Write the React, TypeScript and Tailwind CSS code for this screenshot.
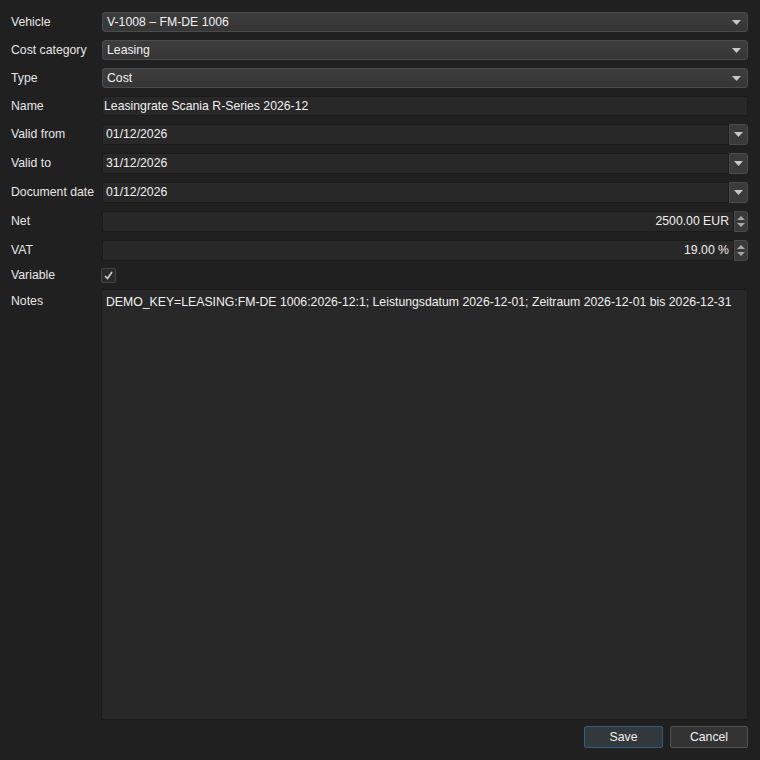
import React from "react";

const font = { fontFamily: '"Liberation Sans", Arial, sans-serif' };

function Arrow() {
  return (
    <svg width="9" height="5" viewBox="0 0 9 5" className="shrink-0">
      <path d="M0 0 H9 L4.5 5 Z" fill="#c8c8c8" />
    </svg>
  );
}

function Combo({ value }: { value: string }) {
  return (
    <div className="flex h-[20px] flex-1 items-center justify-between rounded-[3px] border border-[#4b4b4b] bg-gradient-to-b from-[#3d3d3d] to-[#363636] pl-[4px] pr-[6px] text-[12.25px] text-[#f0f0f0]">
      <span>{value}</span>
      <Arrow />
    </div>
  );
}

function DateEdit({ value }: { value: string }) {
  return (
    <div className="flex h-[21px] flex-1 items-stretch">
      <div className="flex flex-1 items-center rounded-l-[2px] border border-[#1b1b1b] bg-[#282828] pl-[3px] text-[12.25px] text-[#f0f0f0]">
        {value}
      </div>
      <div className="flex w-[19px] items-center justify-center rounded-r-[3px] border border-[#4b4b4b] bg-[#3a3a3a]">
        <Arrow />
      </div>
    </div>
  );
}

function SpinEdit({ value }: { value: string }) {
  return (
    <div className="flex h-[21px] flex-1 items-stretch">
      <div className="flex flex-1 items-center justify-end rounded-l-[2px] border border-[#1b1b1b] bg-[#282828] pr-[4px] text-[12.25px] text-[#f0f0f0]">
        {value}
      </div>
      <div className="flex w-[14px] flex-col items-center justify-center gap-[3px] rounded-r-[3px] border border-[#4b4b4b] bg-[#3a3a3a]">
        <svg width="8" height="4" viewBox="0 0 8 4">
          <path d="M0 4 H8 L4 0 Z" fill="#a8a8a8" />
        </svg>
        <svg width="8" height="4" viewBox="0 0 8 4">
          <path d="M0 0 H8 L4 4 Z" fill="#a8a8a8" />
        </svg>
      </div>
    </div>
  );
}

function Row({ label, children, className = "" }: { label: string; children: React.ReactNode; className?: string }) {
  return (
    <div className={`flex items-center ${className}`}>
      <div className="w-[91px] shrink-0 text-[12.25px] text-[#e6e6e6]">{label}</div>
      {children}
    </div>
  );
}

export default function App() {
  return (
    <div className="flex h-[760px] w-[760px] flex-col bg-[#202020] pb-[12px] pl-[11px] pr-[12px] pt-[12px]" style={font}>
      <div className="flex flex-col gap-[8px]">
        <Row label="Vehicle"><Combo value="V-1008 – FM-DE 1006" /></Row>
        <Row label="Cost category"><Combo value="Leasing" /></Row>
        <Row label="Type"><Combo value="Cost" /></Row>
        <Row label="Name">
          <div className="flex h-[20px] flex-1 items-center rounded-[2px] border border-[#1b1b1b] bg-[#282828] pl-[1px] text-[12.25px] text-[#f0f0f0]">
            Leasingrate Scania R-Series 2026-12
          </div>
        </Row>
        <Row label="Valid from"><DateEdit value="01/12/2026" /></Row>
        <Row label="Valid to"><DateEdit value="31/12/2026" /></Row>
        <Row label="Document date"><DateEdit value="01/12/2026" /></Row>
        <Row label="Net"><SpinEdit value="2500.00 EUR" /></Row>
        <Row label="VAT"><SpinEdit value="19.00 %" /></Row>
      </div>
      <Row label="Variable" className="mt-[7px] h-[15px]">
        <div className="-ml-[1px] flex h-[15px] w-[15px] items-center justify-center rounded-[2px] border border-[#444] bg-[#2a2a2a]">
          <svg width="9" height="9" viewBox="0 0 9 9">
            <path d="M1 5 L3.5 7.5 L8 1" fill="none" stroke="#d0d0d0" strokeWidth="1.6" />
          </svg>
        </div>
      </Row>
      <div className="mt-[6px] flex flex-1 items-stretch">
        <div className="w-[91px] shrink-0 pt-[3px] text-[12.25px] text-[#e6e6e6]">Notes</div>
        <div className="-ml-[1px] flex-1 border border-[#1b1b1b] bg-[#282828] px-[4px] pt-[3px] text-[12.25px] text-[#f0f0f0]">
          DEMO_KEY=LEASING:FM-DE 1006:2026-12:1; Leistungsdatum 2026-12-01; Zeitraum 2026-12-01 bis 2026-12-31
        </div>
      </div>
      <div className="mt-[6px] flex justify-end gap-[7px]">
        <button className="h-[22px] w-[79px] rounded-[2px] border border-[#2f5f7f] bg-[#32383c] pt-[1px] text-[12.25px] text-[#f0f0f0]">Save</button>
        <button className="h-[22px] w-[78px] rounded-[2px] border border-[#505050] bg-[#333333] pt-[1px] text-[12.25px] text-[#f0f0f0]">Cancel</button>
      </div>
    </div>
  );
}
